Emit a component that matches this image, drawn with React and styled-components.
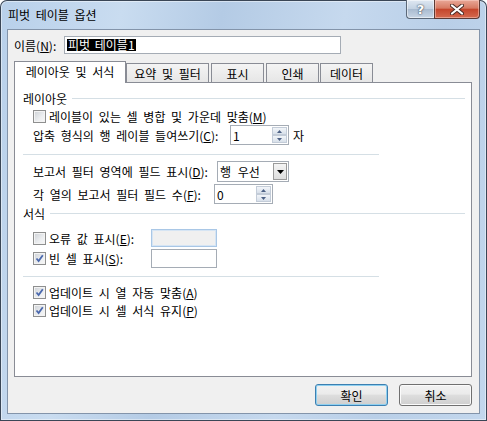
import styled, { createGlobalStyle } from "styled-components";

const GlobalStyle = createGlobalStyle`
  html, body {
    margin: 0;
    padding: 0;
    background: #ffffff;
  }
  body {
    font-family: "Noto Sans CJK KR", "Noto Sans", sans-serif;
    font-size: 12px;
    color: #000000;
  }
  u {
    text-underline-offset: 1px;
  }
`;

const Window = styled.div`
  width: 487px;
  height: 421px;
  box-sizing: border-box;
  padding: 0 7px 7px;
  display: flex;
  flex-direction: column;
  border-radius: 7px 7px 0 0;
  background: linear-gradient(
    100deg,
    #b8d0ea 0%,
    #c9dcf0 22%,
    #b4cbe5 40%,
    #c6d9ee 62%,
    #b9cfe8 80%,
    #c3d7ed 100%
  );
  box-shadow: inset 0 0 0 1px #3a4656, inset 0 0 0 2px rgba(255, 255, 255, 0.45);
`;

const TitleBar = styled.div`
  height: 29px;
  flex: none;
  display: flex;
  align-items: flex-start;
`;

const Title = styled.div`
  margin-top: 7px;
  padding-left: 1px;
  line-height: 16px;
  word-spacing: 3px;
`;

const CaptionButtons = styled.div`
  margin-left: auto;
  display: flex;
  height: 19px;
`;

const HelpButton = styled.div`
  width: 28px;
  height: 19px;
  box-sizing: border-box;
  border: 1px solid #5b6878;
  border-top: none;
  border-right: none;
  border-radius: 0 0 0 4px;
  background: linear-gradient(#dfe8f2 0%, #c3d2e2 48%, #a9bbd0 52%, #c8d6e5 100%);
  box-shadow: inset 0 0 0 1px rgba(255, 255, 255, 0.5);
  display: flex;
  align-items: center;
  justify-content: center;
  color: #ffffff;
  font-family: "DejaVu Sans", sans-serif;
  font-weight: bold;
  font-size: 13px;
  text-shadow: 0 0 2px #3c4856, 0 0 1px #3c4856;
`;

const CloseButton = styled.div`
  width: 46px;
  height: 19px;
  box-sizing: border-box;
  border: 1px solid #5b3a35;
  border-top: none;
  border-radius: 0 0 4px 0;
  background: linear-gradient(#e9a898 0%, #d77b63 45%, #c5462c 52%, #d46a4f 100%);
  box-shadow: inset 0 0 0 1px rgba(255, 220, 210, 0.45);
  display: flex;
  align-items: center;
  justify-content: center;
`;

const Client = styled.div`
  flex: 1;
  box-sizing: border-box;
  background: #f0f0f0;
  border: 1px solid #8394aa;
  padding: 6px 7px 7px 6px;
  display: flex;
  flex-direction: column;
`;

const NameRow = styled.div`
  display: flex;
  align-items: center;
  height: 18px;
`;

const NameLabel = styled.span`
  width: 50px;
`;

const NameInput = styled.div`
  width: 277px;
  height: 18px;
  box-sizing: border-box;
  border: 1px solid #a5acb5;
  background: #ffffff;
  padding-left: 2px;
  display: flex;
  align-items: center;
`;

const Selected = styled.span`
  background: #000000;
  color: #ffffff;
  line-height: 12px;
  padding: 0 1px;
  word-spacing: 2px;
`;

const TabStrip = styled.div`
  margin-top: 7px;
  height: 22px;
  display: flex;
  align-items: flex-end;
  margin-bottom: -1px;
  position: relative;
  z-index: 1;
`;

const Tab = styled.div`
  width: ${(p) => p.$w}px;
  height: ${(p) => (p.$active ? 22 : 19)}px;
  margin-bottom: ${(p) => (p.$active ? 0 : 1)}px;
  margin-right: ${(p) => p.$gap || 0}px;
  box-sizing: border-box;
  border: 1px solid #898c95;
  border-bottom: none;
  background: ${(p) =>
    p.$active ? "#ffffff" : "linear-gradient(#f4f4f4, #e6e6e6)"};
  display: flex;
  align-items: center;
  justify-content: center;
  padding-bottom: ${(p) => (p.$active ? 2 : 0)}px;
  word-spacing: 3px;
`;

const Panel = styled.div`
  flex: 1;
  box-sizing: border-box;
  border: 1px solid #898c95;
  background: #ffffff;
  padding: 0 6px 0 8px;
  display: flex;
  flex-direction: column;
`;

const SectionHeader = styled.div`
  display: flex;
  align-items: center;
  height: 18px;
  margin-top: ${(p) => p.$top || 0}px;
  gap: 5px;
  &::after {
    content: "";
    flex: 1;
    height: 1px;
    background: #d5dfe5;
  }
`;

const Separator = styled.div`
  width: 356px;
  height: 1px;
  background: #d5dfe5;
  margin: ${(p) => p.$top}px 0 6px;
`;

const Row = styled.div`
  display: flex;
  align-items: center;
  height: ${(p) => p.$h || 18}px;
  margin-top: ${(p) => p.$top || 0}px;
  padding-left: 10px;
  word-spacing: 3px;
`;

const Label = styled.span`
  width: ${(p) => p.$w}px;
  flex: none;
  white-space: nowrap;
`;

const Box = styled.span`
  width: 13px;
  height: 13px;
  box-sizing: border-box;
  flex: none;
  margin-right: 3px;
  border: 1px solid #8e8f8f;
  background: linear-gradient(135deg, #cdd1d6 0%, #eceef0 60%, #f7f7f7 100%);
  box-shadow: inset 0 0 0 1px #f3f3f3;
  display: flex;
  align-items: center;
  justify-content: center;
`;

const TextBox = styled.div`
  width: 66px;
  height: ${(p) => p.$h}px;
  box-sizing: border-box;
  border: 1px solid ${(p) => (p.$disabled ? "#a9c7e6" : "#a5acb5")};
  background: ${(p) => (p.$disabled ? "#f0f0f0" : "#ffffff")};
  box-shadow: ${(p) => (p.$disabled ? "inset 0 0 0 1px #d6e5f4" : "none")};
`;

const Spin = styled.div`
  width: 59px;
  height: 20px;
  box-sizing: border-box;
  border: 1px solid #a5acb5;
  background: #ffffff;
  display: flex;
  align-items: center;
  padding-left: 2px;
`;

const SpinValue = styled.span`
  flex: 1;
`;

const SpinButtons = styled.div`
  width: 15px;
  height: 16px;
  margin-right: 1px;
  display: flex;
  flex-direction: column;
`;

const SpinHalf = styled.div`
  flex: 1;
  box-sizing: border-box;
  border: 1px solid #c3ccd8;
  background: linear-gradient(#f2f5f9, #d8e0ea);
  display: flex;
  align-items: center;
  justify-content: center;
`;

const Combo = styled.div`
  width: 72px;
  height: 21px;
  box-sizing: border-box;
  border: 1px solid #a5acb5;
  background: #ffffff;
  display: flex;
  align-items: center;
  padding-left: 2px;
`;

const ComboText = styled.span`
  flex: 1;
  word-spacing: 4px;
`;

const ComboArrow = styled.div`
  width: 14px;
  height: 17px;
  box-sizing: border-box;
  margin-right: 1px;
  border: 1px solid #9a9a9a;
  background: linear-gradient(#f4f4f4, #dedede);
  display: flex;
  align-items: center;
  justify-content: center;
`;

const Unit = styled.span`
  margin-left: 4px;
`;

const ButtonRow = styled.div`
  margin-top: 7px;
  display: flex;
  justify-content: flex-end;
  gap: 11px;
`;

const Button = styled.div`
  width: 73px;
  height: 22px;
  box-sizing: border-box;
  border: 1px solid ${(p) => (p.$default ? "#3c7fb1" : "#707070")};
  border-radius: 3px;
  background: linear-gradient(#f2f2f2 0%, #ebebeb 45%, #dddddd 52%, #cfcfcf 100%);
  box-shadow: inset 0 0 0 1px ${(p) => (p.$default ? "#8fd0f0" : "#fbfbfb")};
  display: flex;
  align-items: center;
  justify-content: center;
`;

function CheckBox({ checked }) {
  return (
    <Box>
      {checked && (
        <svg width="9" height="9" viewBox="0 0 9 9">
          <path
            d="M1.5 4.5 L3.6 7 L7.8 1.2"
            fill="none"
            stroke="#4a68ad"
            strokeWidth="1.8"
          />
        </svg>
      )}
    </Box>
  );
}

function SpinBox({ value }) {
  return (
    <Spin>
      <SpinValue>{value}</SpinValue>
      <SpinButtons>
        <SpinHalf>
          <svg width="5" height="3" viewBox="0 0 5 3">
            <path d="M0 3 L2.5 0 L5 3 Z" fill="#4d6185" />
          </svg>
        </SpinHalf>
        <SpinHalf>
          <svg width="5" height="3" viewBox="0 0 5 3">
            <path d="M0 0 L2.5 3 L5 0 Z" fill="#4d6185" />
          </svg>
        </SpinHalf>
      </SpinButtons>
    </Spin>
  );
}

const tabs = [
  { label: "레이아웃 및 서식", w: 112, active: true },
  { label: "요약 및 필터", w: 83, gap: 2 },
  { label: "표시", w: 53, gap: 2 },
  { label: "인쇄", w: 53, gap: 1 },
  { label: "데이터", w: 53 },
];

export default function App() {
  return (
    <>
      <GlobalStyle />
      <Window>
        <TitleBar>
          <Title>피벗 테이블 옵션</Title>
          <CaptionButtons>
            <HelpButton>?</HelpButton>
            <CloseButton>
              <svg width="14" height="11" viewBox="0 0 14 11">
                <path
                  d="M2 1.5 L12 9.5 M12 1.5 L2 9.5"
                  stroke="#4a2a24"
                  strokeWidth="4"
                  strokeLinecap="round"
                />
                <path
                  d="M2 1.5 L12 9.5 M12 1.5 L2 9.5"
                  stroke="#ffffff"
                  strokeWidth="2.2"
                  strokeLinecap="round"
                />
              </svg>
            </CloseButton>
          </CaptionButtons>
        </TitleBar>
        <Client>
          <NameRow>
            <NameLabel>
              이름(<u>N</u>):
            </NameLabel>
            <NameInput>
              <Selected>피벗 테이블1</Selected>
            </NameInput>
          </NameRow>

          <TabStrip>
            {tabs.map((t) => (
              <Tab key={t.label} $w={t.w} $active={t.active} $gap={t.gap}>
                {t.label}
              </Tab>
            ))}
          </TabStrip>

          <Panel>
            <SectionHeader $top={6}>레이아웃</SectionHeader>
            <Row>
              <CheckBox />
              레이블이 있는 셀 병합 및 가운데 맞춤(<u>M</u>)
            </Row>
            <Row $h={20}>
              <Label $w={197}>
                압축 형식의 행 레이블 들여쓰기(<u>C</u>):
              </Label>
              <SpinBox value="1" />
              <Unit>자</Unit>
            </Row>

            <Separator $top={9} />

            <Row $h={21}>
              <Label $w={184}>
                보고서 필터 영역에 필드 표시(<u>D</u>):
              </Label>
              <Combo>
                <ComboText>행 우선</ComboText>
                <ComboArrow>
                  <svg width="7" height="4" viewBox="0 0 7 4">
                    <path d="M0 0 L7 0 L3.5 4 Z" fill="#000000" />
                  </svg>
                </ComboArrow>
              </Combo>
            </Row>
            <Row $h={20} $top={2}>
              <Label $w={181}>
                각 열의 보고서 필터 필드 수(<u>F</u>):
              </Label>
              <SpinBox value="0" />
            </Row>

            <SectionHeader>서식</SectionHeader>
            <Row $h={20} $top={6}>
              <CheckBox />
              <Label $w={102}>
                오류 값 표시(<u>E</u>):
              </Label>
              <TextBox $h={18} $disabled />
            </Row>
            <Row $h={20}>
              <CheckBox checked />
              <Label $w={102}>
                빈 셀 표시(<u>S</u>):
              </Label>
              <TextBox $h={19} />
            </Row>

            <Separator $top={8} />

            <Row>
              <CheckBox checked />
              업데이트 시 열 자동 맞춤(<u>A</u>)
            </Row>
            <Row>
              <CheckBox checked />
              업데이트 시 셀 서식 유지(<u>P</u>)
            </Row>
          </Panel>

          <ButtonRow>
            <Button $default>확인</Button>
            <Button>취소</Button>
          </ButtonRow>
        </Client>
      </Window>
    </>
  );
}
